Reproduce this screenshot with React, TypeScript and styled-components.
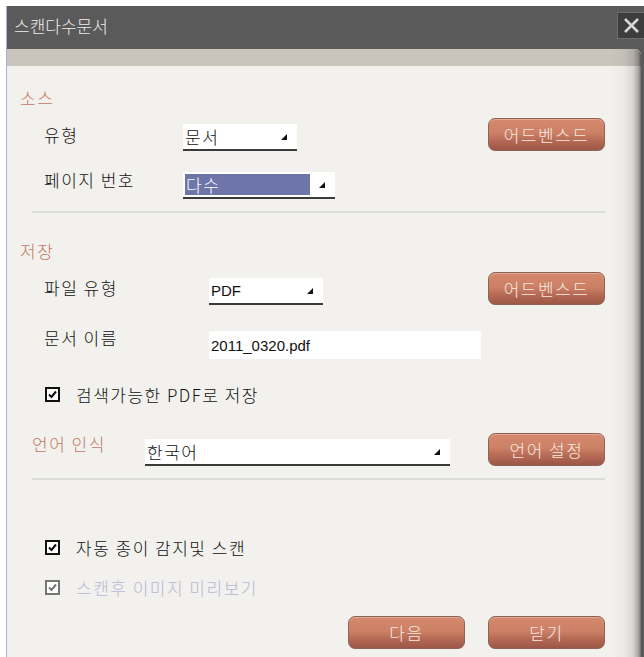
import React from "react";
import styled, { createGlobalStyle } from "styled-components";

const Global = createGlobalStyle`
  html, body { margin: 0; padding: 0; background: #ffffff; }
  body { font-family: "Noto Sans CJK KR", "Liberation Sans", sans-serif; font-weight: 300; }
  * { box-sizing: border-box; }
`;

const Window = styled.div`
  margin: 6px 0 0 6px;
  width: 638px;
  height: 651px;
  border-left: 1px solid #aab0dc;
  background: #5a5a5a;
  display: flex;
  flex-direction: column;
`;

const TitleBar = styled.div`
  height: 43px;
  flex-shrink: 0;
  display: flex;
  justify-content: space-between;
  align-items: flex-start;
`;

const Title = styled.div`
  padding: 9px 0 0 7px;
  color: #ececec;
  font-size: 17px;
  line-height: 22px;
  letter-spacing: 0px;
`;

const CloseButton = styled.button`
  margin-top: 6px;
  width: 27px;
  height: 27px;
  padding: 0;
  background: #3d3d3d;
  border: 1px solid #6e6e6e;
  border-right: none;
  display: flex;
  align-items: center;
  justify-content: center;
`;

const Panel = styled.div`
  flex: 1;
  margin-right: 3px;
  border-top-right-radius: 6px;
  position: relative;
  overflow: hidden;
  background: #f2f1ed;
  display: flex;
  flex-direction: column;

  &::after {
    content: "";
    position: absolute;
    top: 0;
    right: 0;
    bottom: 0;
    width: 30px;
    pointer-events: none;
    background: linear-gradient(
      to right,
      rgba(0, 0, 0, 0) 0%,
      rgba(0, 0, 0, 0.03) 45%,
      rgba(0, 0, 0, 0.12) 75%,
      rgba(0, 0, 0, 0.32) 92%,
      rgba(0, 0, 0, 0.55) 100%
    );
  }
`;

const Band = styled.div`
  height: 17px;
  flex-shrink: 0;
  background: #c9c4bc;
`;

const SectionTitle = styled.div<{ $top: number }>`
  margin-top: ${(p) => p.$top}px;
  padding-left: 13px;
  height: 20px;
  line-height: 20px;
  font-size: 17px;
  letter-spacing: 1.5px;
  color: #c47862;
`;

const Row = styled.div<{ $top: number; $height: number; $indent: number; $align?: string }>`
  margin-top: ${(p) => p.$top}px;
  height: ${(p) => p.$height}px;
  padding: 0 36px 0 ${(p) => p.$indent}px;
  display: flex;
  align-items: ${(p) => p.$align ?? "flex-end"};
`;

const Label = styled.div<{ $width: number; $accent?: boolean; $drop?: number }>`
  width: ${(p) => p.$width}px;
  flex-shrink: 0;
  align-self: center;
  margin-top: ${(p) => p.$drop ?? 0}px;
  font-size: 17px;
  letter-spacing: 1.5px;
  line-height: 20px;
  color: ${(p) => (p.$accent ? "#c47862" : "#111111")};
`;

const Select = styled.div<{ $width: number; $height: number }>`
  width: ${(p) => p.$width}px;
  height: ${(p) => p.$height}px;
  background: #ffffff;
  border-bottom: 2px solid #3a3a3a;
  display: flex;
  align-items: center;
  padding: 0 10px 0 2px;
  color: #111111;
`;

const SelectText = styled.span<{ $latin?: boolean }>`
  flex: 1;
  font-family: ${(p) =>
    p.$latin ? '"Liberation Sans", Arial, sans-serif' : '"Noto Sans CJK KR", sans-serif'};
  font-size: ${(p) => (p.$latin ? 15 : 17)}px;
  font-weight: ${(p) => (p.$latin ? 400 : 300)};
  letter-spacing: ${(p) => (p.$latin ? 0 : 1.5)}px;
  line-height: 20px;
`;

const Highlight = styled.span`
  width: 125px;
  height: 21px;
  margin-right: auto;
  background: #6e75a8;
  color: #ffffff;
  font-size: 17px;
  line-height: 21px;
  padding-left: 1px;
  letter-spacing: 1.5px;
`;

const Arrow = styled.svg`
  flex-shrink: 0;
  width: 6px;
  height: 6px;
`;

const TextInput = styled.div`
  width: 272px;
  height: 28px;
  background: #ffffff;
  padding-left: 2px;
  display: flex;
  align-items: center;
  font-family: "Liberation Sans", Arial, sans-serif;
  font-weight: 400;
  font-size: 15px;
  color: #111111;
`;

const ActionButton = styled.button<{ $ml?: string }>`
  margin-left: ${(p) => p.$ml ?? "auto"};
  width: 117px;
  height: 33px;
  flex-shrink: 0;
  border-radius: 7px;
  border: 1px solid #8d6257;
  background: linear-gradient(to bottom, #d4896d 0%, #cc8065 45%, #b56a55 70%, #9c5747 100%);
  box-shadow: inset 0 1px 0 rgba(255, 230, 215, 0.35);
  color: #f9e9e2;
  font-family: "Noto Sans CJK KR", sans-serif;
  font-weight: 300;
  font-size: 17px;
  letter-spacing: 1.5px;
  padding: 0;
  line-height: 20px;
`;

const Divider = styled.div<{ $top: number }>`
  margin: ${(p) => p.$top}px 36px 0 25px;
  height: 2px;
  background: #dcdcd9;
`;

const CheckRow = styled.label<{ $top: number; $muted?: boolean }>`
  margin-top: ${(p) => p.$top}px;
  height: 20px;
  padding-left: 38px;
  display: flex;
  align-items: center;
  gap: 16px;
  font-size: 17px;
  letter-spacing: 1.5px;
  color: ${(p) => (p.$muted ? "#b6b7d6" : "#111111")};
`;

const Box = styled.span<{ $muted?: boolean }>`
  width: 15px;
  height: 15px;
  flex-shrink: 0;
  background: #ffffff;
  border: 2px solid ${(p) => (p.$muted ? "#767676" : "#111111")};
  display: flex;
  align-items: center;
  justify-content: center;
`;

const Footer = styled.div`
  margin-top: 19px;
  padding-right: 36px;
  display: flex;
  justify-content: flex-end;
  gap: 23px;
`;

const DropArrow = () => (
  <Arrow viewBox="0 0 6 6">
    <polygon points="6,0 6,6 0,6" fill="#111" />
  </Arrow>
);

const Check = ({ muted }: { muted?: boolean }) => (
  <Box $muted={muted}>
    <svg width="9" height="9" viewBox="0 0 9 9">
      <polyline
        points="1,4.5 3.5,7 8,1.5"
        fill="none"
        stroke={muted ? "#767676" : "#111"}
        strokeWidth="2"
      />
    </svg>
  </Box>
);

export default function App() {
  return (
    <>
      <Global />
      <Window>
        <TitleBar>
          <Title>스캔다수문서</Title>
          <CloseButton aria-label="닫기">
            <svg width="17" height="17" viewBox="0 0 17 17">
              <path d="M2 2 L15 15 M15 2 L2 15" stroke="#d6d6d6" strokeWidth="2.6" />
            </svg>
          </CloseButton>
        </TitleBar>
        <Panel>
          <Band />

          <SectionTitle $top={22}>소스</SectionTitle>
          <Row $top={10} $height={33} $indent={37}>
            <Label $width={139}>유형</Label>
            <Select $width={114} $height={27}>
              <SelectText>문서</SelectText>
              <DropArrow />
            </Select>
            <ActionButton>어드벤스드</ActionButton>
          </Row>
          <Row $top={15} $height={33} $indent={37}>
            <Label $width={139} $drop={-6}>페이지 번호</Label>
            <Select $width={152} $height={27}>
              <Highlight>다수</Highlight>
              <DropArrow />
            </Select>
          </Row>
          <Divider $top={12} />

          <SectionTitle $top={28}>저장</SectionTitle>
          <Row $top={10} $height={34} $indent={37}>
            <Label $width={165}>파일 유형</Label>
            <Select $width={114} $height={27}>
              <SelectText $latin>PDF</SelectText>
              <DropArrow />
            </Select>
            <ActionButton>어드벤스드</ActionButton>
          </Row>
          <Row $top={26} $height={28} $indent={37} $align="center">
            <Label $width={165} $drop={-14}>문서 이름</Label>
            <TextInput>2011_0320.pdf</TextInput>
          </Row>
          <CheckRow $top={25}>
            <Check />
            검색가능한 PDF로 저장
          </CheckRow>
          <Row $top={29} $height={33} $indent={25}>
            <Label $width={113} $accent $drop={-12}>언어 인식</Label>
            <Select $width={305} $height={27}>
              <SelectText>한국어</SelectText>
              <DropArrow />
            </Select>
            <ActionButton>언어 설정</ActionButton>
          </Row>
          <Divider $top={12} />

          <CheckRow $top={57}>
            <Check />
            자동 종이 감지및 스캔
          </CheckRow>
          <CheckRow $top={20} $muted>
            <Check muted />
            스캔후 이미지 미리보기
          </CheckRow>

          <Footer>
            <ActionButton $ml="0">다음</ActionButton>
            <ActionButton $ml="0">닫기</ActionButton>
          </Footer>
        </Panel>
      </Window>
    </>
  );
}
